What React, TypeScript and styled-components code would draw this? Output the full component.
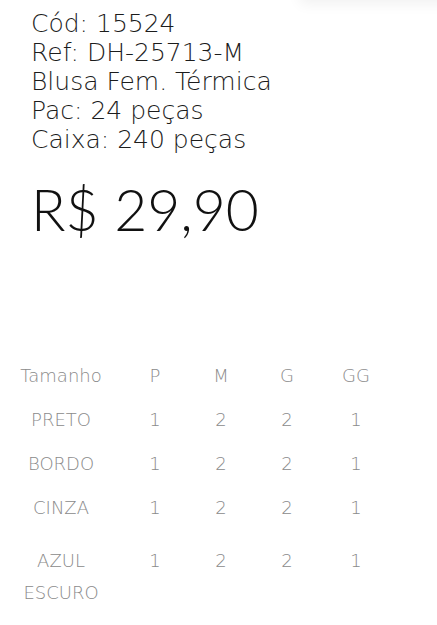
import styled, { createGlobalStyle } from "styled-components";

const GlobalStyle = createGlobalStyle`
  html, body {
    margin: 0;
    padding: 0;
    background: #ffffff;
  }
  body {
    font-family: "DejaVu Sans", "Liberation Sans", sans-serif;
    font-weight: 200;
    overflow: hidden;
  }
`;

const Page = styled.div`
  position: relative;
  width: 437px;
  height: 625px;
  overflow: hidden;
`;

// faint shadow of the card that sits above the viewport
const TopShade = styled.div`
  position: absolute;
  top: -30px;
  left: 300px;
  right: -20px;
  height: 30px;
  box-shadow: 0 4px 14px rgba(0, 0, 0, 0.06);
`;

const Info = styled.div`
  padding: 9px 0 0 31px;
  color: #1c1c1c;
  font-size: 25px;
  line-height: 29px;
`;

const Line = styled.div`
  white-space: nowrap;
`;

const Price = styled.div`
  margin: 20px 0 0 31px;
  font-family: Lato, "Liberation Sans", sans-serif;
  font-weight: 300;
  font-size: 57px;
  line-height: 70px;
  color: #111;
`;

const Sizes = styled.div`
  margin-top: 110px;
  display: grid;
  grid-template-columns: 122px 66px 66px 66px 72px;
  color: #8a8a8a;
  font-size: 18px;
`;

const Row = styled.div<{ $extra?: number }>`
  display: contents;
  & > div {
    padding-top: ${(p) => 6 + (p.$extra ?? 0)}px;
    min-height: 38px;
  }
`;

const Cell = styled.div`
  text-align: center;
  line-height: 32px;
`;

const Label = styled(Cell)`
  padding-left: 16px;
  padding-right: 16px;
`;

const sizes = ["P", "M", "G", "GG"];

const rows = [
  { color: "PRETO", qty: [1, 2, 2, 1] },
  { color: "BORDO", qty: [1, 2, 2, 1] },
  { color: "CINZA", qty: [1, 2, 2, 1] },
  { color: "AZUL ESCURO", qty: [1, 2, 2, 1], extra: 9 },
];

export default function App() {
  return (
    <Page>
      <GlobalStyle />
      <TopShade />
      <Info>
        <Line>Cód: 15524</Line>
        <Line>Ref: DH-25713-M</Line>
        <Line>Blusa Fem. Térmica</Line>
        <Line>Pac: 24 peças</Line>
        <Line>Caixa: 240 peças</Line>
      </Info>
      <Price>R$ 29,90</Price>
      <Sizes>
        <Row>
          <Cell>Tamanho</Cell>
          {sizes.map((s) => (
            <Cell key={s}>{s}</Cell>
          ))}
        </Row>
        {rows.map((r) => (
          <Row key={r.color} $extra={r.extra}>
            <Label>{r.color}</Label>
            {r.qty.map((q, i) => (
              <Cell key={i}>{q}</Cell>
            ))}
          </Row>
        ))}
      </Sizes>
    </Page>
  );
}
